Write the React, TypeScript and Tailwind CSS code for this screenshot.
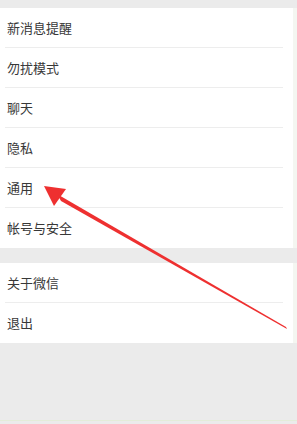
import React from 'react';

const groupOne = ['新消息提醒', '勿扰模式', '聊天', '隐私', '通用', '帐号与安全'];
const groupTwo = ['关于微信', '退出'];

const Row = ({ label, last }: { label: string; last?: boolean }) => (
  <div className="h-[40px] flex flex-col">
    <div className="flex-1 flex items-center pl-[7px] text-[13px] text-[#383838]">{label}</div>
    {!last && <div className="h-px ml-[5px] mr-[10px] bg-[#ededed]" />}
  </div>
);

export default function App() {
  return (
    <div
      className="relative w-[297px] h-[424px] bg-[#ebebeb] overflow-hidden"
      style={{ fontFamily: '"Noto Sans CJK SC", "Noto Sans", sans-serif' }}
    >
      <div className="h-[8px]" />
      <div className="bg-white border-r-[4px] border-[#f4f6f1]">
        {groupOne.map((l, i) => (
          <Row key={l} label={l} last={i === groupOne.length - 1} />
        ))}
      </div>
      <div className="h-[15px]" />
      <div className="bg-white border-r-[4px] border-[#f4f6f1]">
        {groupTwo.map((l, i) => (
          <Row key={l} label={l} last={i === groupTwo.length - 1} />
        ))}
      </div>
      <div className="absolute left-0 right-0 bottom-[3px] h-px bg-[#e4ecd8]" />

      <svg className="absolute inset-0" width="297" height="424" viewBox="0 0 297 424">
        <polygon points="44,186 66,189 54,206" fill="#ee3030" />
        <polygon points="57,194 61,201 287,329 286,327" fill="#ee3030" />
      </svg>
    </div>
  );
}
